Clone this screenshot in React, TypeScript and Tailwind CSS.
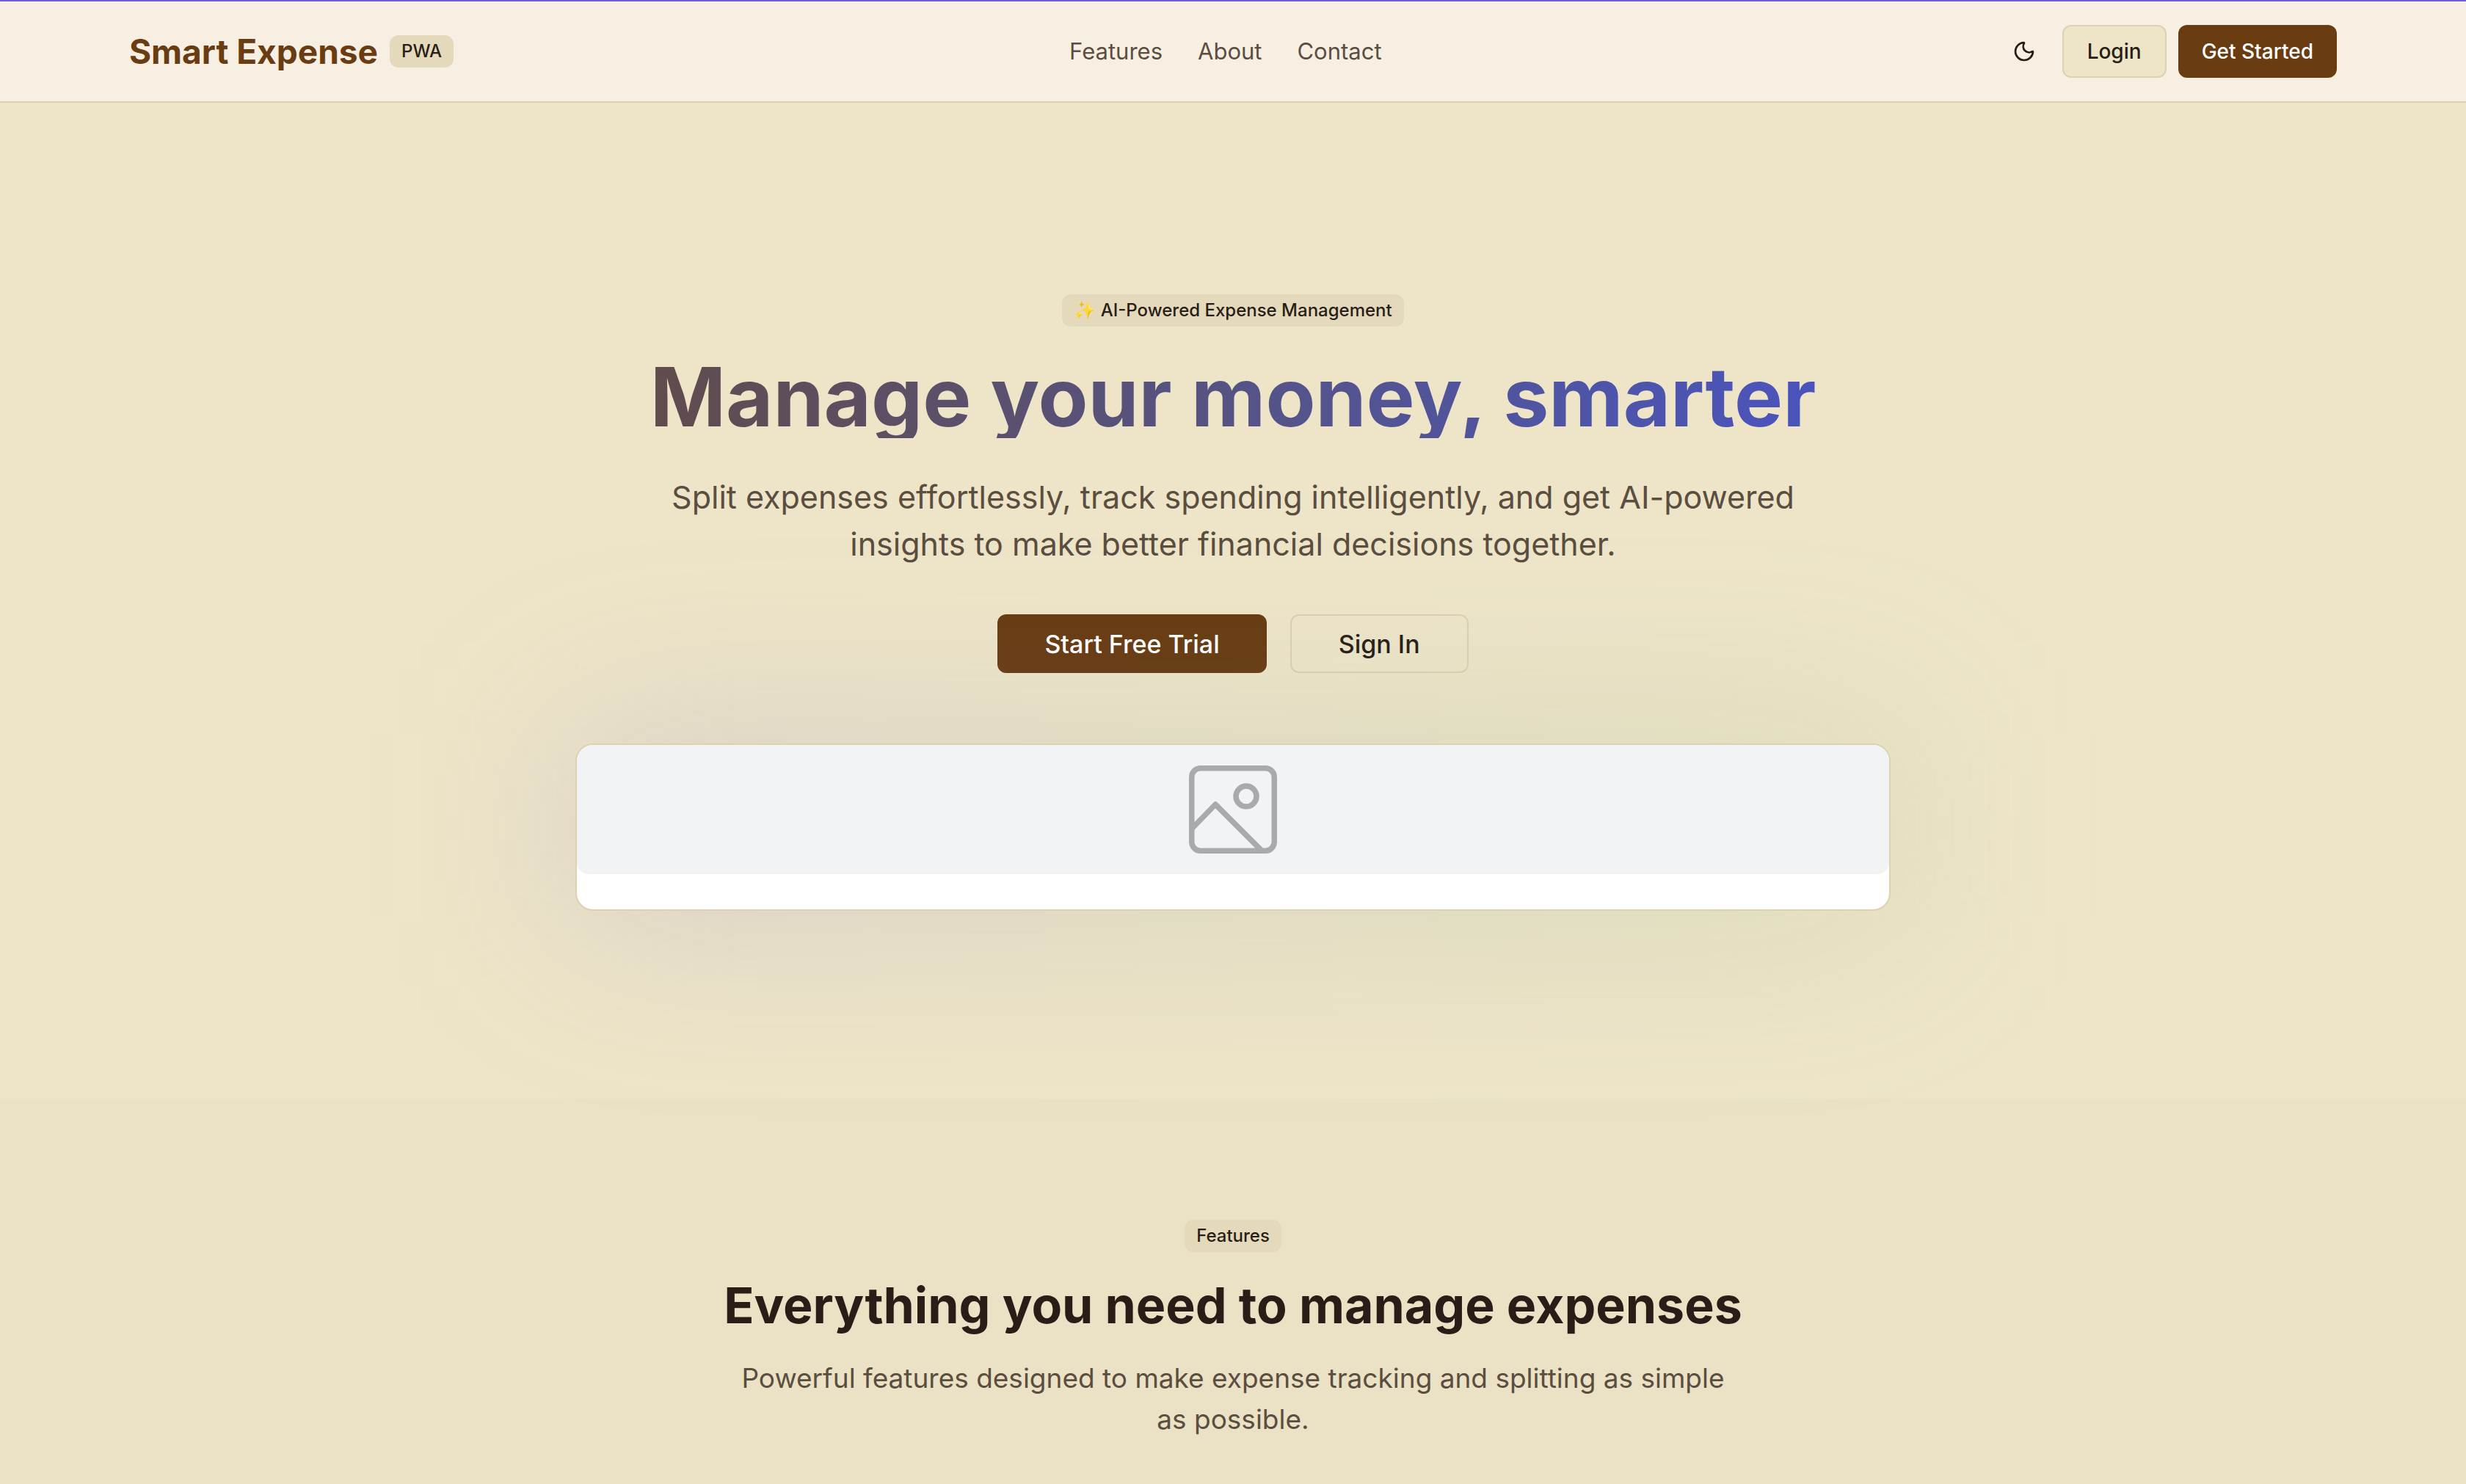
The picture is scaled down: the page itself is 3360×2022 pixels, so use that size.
import { Moon } from "lucide-react";
import type { ReactNode } from "react";

function Badge({ children }: { children: ReactNode }) {
  return (
    <span className="inline-flex h-11 items-center rounded-xl bg-[#e5d9bc] px-4 text-[24px] leading-8 font-medium">
      {children}
    </span>
  );
}

function Header() {
  return (
    <header className="border-t-2 border-b-2 border-t-[#6a5fd0] border-b-[#dbd0b0] bg-[#f7f0e2]">
      <div className="mx-auto flex w-full max-w-[3072px] items-center justify-between px-8 py-8">
        <div className="flex items-center gap-4">
          <a href="#top" className="text-[46px] leading-16 font-bold text-[#693c12]">Smart Expense</a>
          <Badge>PWA</Badge>
        </div>
        <nav className="flex items-center gap-12 text-[31px] leading-12 text-[#5b4e40]">
          <a href="#features">Features</a>
          <a href="#about">About</a>
          <a href="#contact">Contact</a>
        </nav>
        <div className="flex items-center gap-4 text-[28px] font-medium">
          <button type="button" aria-label="Toggle theme" className="flex size-18 items-center justify-center">
            <Moon size={32} />
          </button>
          <button type="button" className="h-18 rounded-xl border-2 border-[#dcd1b0] bg-[#eee5c8] px-8">Login</button>
          <button type="button" className="h-18 rounded-xl bg-[#693c12] px-8 text-white">Get Started</button>
        </div>
      </div>
    </header>
  );
}

function PreviewCard() {
  return (
    <div className="relative mt-24 w-full">
      <div className="absolute -inset-4 bg-linear-to-r from-[#6a62c8]/18 to-[#78b060]/18 blur-[128px]" />
      <div className="relative overflow-hidden rounded-3xl border-2 border-[#dcd1b0] bg-white pb-12">
        <div className="flex h-44 items-center justify-center rounded-b-2xl bg-[#f1f3f5]">
          <svg viewBox="0 0 120 120" className="size-30" fill="none" stroke="#a9aaac" strokeWidth="7.5" role="img" aria-label="Image placeholder">
            <rect x="3.75" y="3.75" width="112.5" height="112.5" rx="12" />
            <circle cx="78" cy="42" r="14" />
            <path d="M4 86 36 53 99 116" strokeLinejoin="round" />
          </svg>
        </div>
      </div>
    </div>
  );
}

function Hero() {
  return (
    <section id="top" className="flex justify-center bg-[#eee5c8] px-8 pt-[261px] pb-64">
      <div className="flex w-full max-w-[1792px] flex-col items-center text-center">
        <Badge>✨ AI-Powered Expense Management</Badge>
        <h1 className="mt-8 w-full bg-linear-to-r from-[#624a45] to-[#4953c4] bg-clip-text pt-2 text-[111px] leading-28 font-bold whitespace-nowrap text-transparent">
          Manage your money, smarter
        </h1>
        <p className="mt-12 max-w-[1600px] text-[43px] leading-16 text-[#5b4e40]">
          Split expenses effortlessly, track spending intelligently, and get AI-powered insights to make better financial decisions together.
        </p>
        <div className="mt-16 flex gap-8 text-[34px] font-medium">
          <button type="button" className="h-20 rounded-xl bg-[#693c12] px-16 text-white">Start Free Trial</button>
          <button type="button" className="h-20 rounded-xl border-2 border-[#dcd1b0] px-16">Sign In</button>
        </div>
        <PreviewCard />
      </div>
    </section>
  );
}

function Features() {
  return (
    <section id="features" className="flex flex-col items-center bg-[#ebe2c5] px-8 pt-[165px] pb-24 text-center">
      <Badge>Features</Badge>
      <h2 className="mt-8 text-[68px] leading-20 font-bold">Everything you need to manage expenses</h2>
      <p className="mt-8 max-w-[1360px] text-[37px] leading-14 text-[#5b4e40]">
        Powerful features designed to make expense tracking and splitting as simple as possible.
      </p>
    </section>
  );
}

export default function App() {
  return (
    <div className="min-h-screen overflow-hidden bg-[#ebe2c5] font-['Inter',sans-serif] text-[#281e17]">
      <Header />
      <main>
        <Hero />
        <Features />
      </main>
    </div>
  );
}
